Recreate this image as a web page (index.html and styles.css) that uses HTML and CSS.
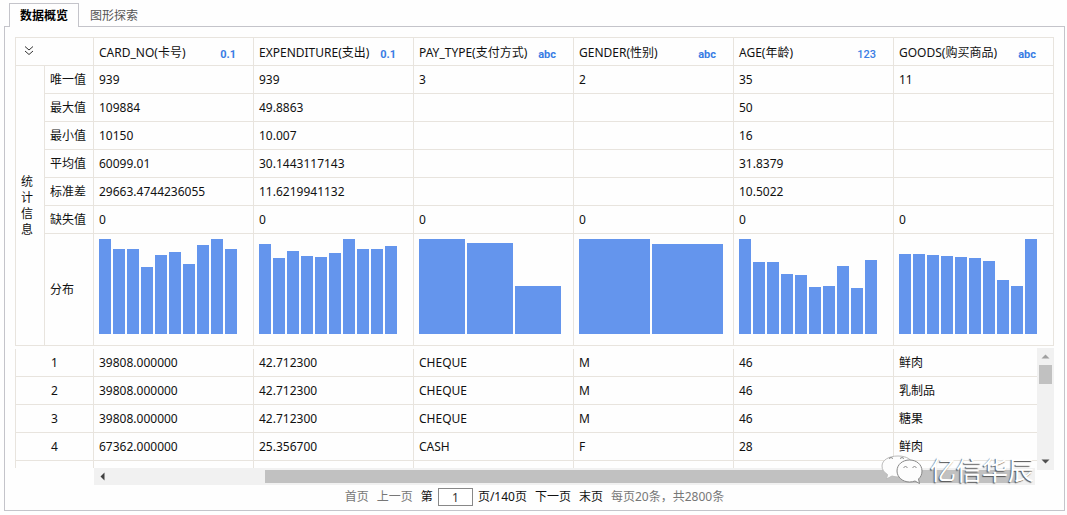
FILE: index.html
```html
<!DOCTYPE html>
<html lang="zh-CN">
<head>
  <meta charset="UTF-8" />
  <meta name="viewport" content="width=device-width, initial-scale=1.0"/>
  <title>数据概览</title>
  <link rel="stylesheet" href="styles.css">
</head>
<body>

<nav class="tabs">
  <button class="tab active">数据概览</button>
  <button class="tab">图形探索</button>
</nav>

<main class="panel">
  <table class="grid stats">
    <colgroup>
      <col class="col-group"><col class="col-label"><col><col><col><col><col><col>
    </colgroup>
    <thead>
      <tr>
        <th colspan="2">
          <button class="toggle" aria-label="收起">
            <svg width="12" height="12" viewBox="0 0 12 12"><path d="M2 1.500L6 5L10 1.500M2 6L6 9.500L10 6"/></svg>
          </button>
        </th>
        <th><div class="head"><span>CARD_NO(卡号)</span><span class="type">0.1</span></div></th>
        <th><div class="head"><span>EXPENDITURE(支出)</span><span class="type">0.1</span></div></th>
        <th><div class="head"><span>PAY_TYPE(支付方式)</span><span class="type">abc</span></div></th>
        <th><div class="head"><span>GENDER(性别)</span><span class="type">abc</span></div></th>
        <th><div class="head"><span>AGE(年龄)</span><span class="type int">123</span></div></th>
        <th><div class="head"><span>GOODS(购买商品)</span><span class="type">abc</span></div></th>
      </tr>
    </thead>
    <tbody>
      <tr>
        <th rowspan="7" class="group"><span>统计信息</span></th>
        <th>唯一值</th><td>939</td><td>939</td><td>3</td><td>2</td><td>35</td><td>11</td>
      </tr>
      <tr><th>最大值</th><td>109884</td><td>49.8863</td><td></td><td></td><td>50</td><td></td></tr>
      <tr><th>最小值</th><td>10150</td><td>10.007</td><td></td><td></td><td>16</td><td></td></tr>
      <tr><th>平均值</th><td>60099.01</td><td>30.1443117143</td><td></td><td></td><td>31.8379</td><td></td></tr>
      <tr><th>标准差</th><td>29663.4744236055</td><td>11.6219941132</td><td></td><td></td><td>10.5022</td><td></td></tr>
      <tr><th>缺失值</th><td>0</td><td>0</td><td>0</td><td>0</td><td>0</td><td>0</td></tr>
      <tr class="dist">
        <th>分布</th>
        <td><div class="chart">
          <i style="height:95px"></i><i style="height:85px"></i><i style="height:85px"></i><i style="height:67px"></i><i style="height:79px"></i><i style="height:82px"></i><i style="height:70px"></i><i style="height:89px"></i><i style="height:95px"></i><i style="height:85px"></i>
        </div></td>
        <td><div class="chart">
          <i style="height:90px"></i><i style="height:76px"></i><i style="height:83px"></i><i style="height:78px"></i><i style="height:77px"></i><i style="height:81px"></i><i style="height:95px"></i><i style="height:85px"></i><i style="height:85px"></i><i style="height:88px"></i>
        </div></td>
        <td><div class="chart three">
          <i style="height:95px"></i><i style="height:91px"></i><i style="height:48px"></i>
        </div></td>
        <td><div class="chart two">
          <i style="height:95px"></i><i style="height:90px"></i>
        </div></td>
        <td><div class="chart">
          <i style="height:95px"></i><i style="height:72px"></i><i style="height:72px"></i><i style="height:60px"></i><i style="height:59px"></i><i style="height:47px"></i><i style="height:48px"></i><i style="height:68px"></i><i style="height:46px"></i><i style="height:74px"></i>
        </div></td>
        <td><div class="chart">
          <i style="height:80px"></i><i style="height:80px"></i><i style="height:79px"></i><i style="height:78px"></i><i style="height:77px"></i><i style="height:76px"></i><i style="height:73px"></i><i style="height:54px"></i><i style="height:48px"></i><i style="height:95px"></i>
        </div></td>
      </tr>
    </tbody>
  </table>

  <div class="data">
    <div class="viewport">
      <table class="grid rows">
        <colgroup>
          <col class="col-index"><col><col><col><col><col><col>
        </colgroup>
        <tbody>
          <tr><th>1</th><td>39808.000000</td><td>42.712300</td><td>CHEQUE</td><td>M</td><td>46</td><td>鲜肉</td></tr>
          <tr><th>2</th><td>39808.000000</td><td>42.712300</td><td>CHEQUE</td><td>M</td><td>46</td><td>乳制品</td></tr>
          <tr><th>3</th><td>39808.000000</td><td>42.712300</td><td>CHEQUE</td><td>M</td><td>46</td><td>糖果</td></tr>
          <tr><th>4</th><td>67362.000000</td><td>25.356700</td><td>CASH</td><td>F</td><td>28</td><td>鲜肉</td></tr>
          <tr><th></th><td></td><td></td><td></td><td></td><td></td><td></td></tr>
        </tbody>
      </table>
    </div>
    <div class="vbar">
      <svg width="9" height="5" viewBox="0 0 9 5"><path fill="#a0a0a0" d="M0.500 4.500L4.500 0.500L8.500 4.500z"/></svg>
      <div class="vthumb"></div>
      <svg width="9" height="5" viewBox="0 0 9 5"><path fill="#505050" d="M0.500 0.500L4.500 4.500L8.500 0.500z"/></svg>
    </div>
  </div>

  <div class="hbar">
    <svg width="5" height="9" viewBox="0 0 5 9"><path fill="#404040" d="M4.500 0.500L0.500 4.500L4.500 8.500z"/></svg>
    <div class="hthumb"></div>
  </div>

  <div class="pager">
    <a class="off" href="#">首页</a>
    <a class="off" href="#">上一页</a>
    <label for="page">第</label>
    <input id="page" type="text" value="1">
    <span>页/140页</span>
    <a href="#">下一页</a>
    <a href="#">末页</a>
    <span class="off">每页20条，共2800条</span>
  </div>

  <div class="watermark">
    <svg width="42" height="30" viewBox="0 0 42 30">
      <path class="back" d="M17 1C8 1 1 5 1 11C1 14.500 3 17.500 6.500 19.500L5.500 24L11 21C13 21.700 15 22 17 22C26 22 32 17.500 32 11C32 5 26 1 17 1z"/>
      <path d="M28.500 5C21.500 5 16 9.500 16 16C16 22 21.500 27 28.500 27C30.500 27 32.500 26.600 34 26L38.500 28.500L37.500 24C40 22 41 19 41 16C41 9.500 35.500 5 28.500 5z"/>
      <path class="eye" d="M8 3.500q2-2 4 0M19 3.500q2-2 4 0M22.500 12.500q2-2 4 0M31.500 12.500q2-2 4 0"/>
    </svg>
    <span>亿信华辰</span>
  </div>
</main>

</body>
</html>
```
FILE: styles.css
```css
* {
  box-sizing: border-box;
}

body {
  margin: 0;
  padding: 3px 2px 4px 4px;
  background: #fefefe;
  color: #111;
  font-family: "Noto Sans", "Noto Sans CJK SC", sans-serif;
  font-size: 12px;
  line-height: 16px;
}

button, input {
  font: inherit;
}

a {
  color: inherit;
  text-decoration: none;
}

/* tabs */
.tabs {
  display: flex;
  padding-left: 5px;
}

.tab {
  height: 24px;
  padding: 0 10px;
  border: 1px solid transparent;
  border-bottom: none;
  background: none;
  color: #555;
}

.tab.active {
  position: relative;
  z-index: 1;
  border-color: #c4c4ca;
  background: #fefefe;
  color: #000;
  font-weight: bold;
}

.panel {
  position: relative;
  margin-top: -1px;
  padding: 10px;
  padding-bottom: 4px;
  border: 1px solid #c4c4ca;
}

/* tables */
.grid {
  width: 100%;
  table-layout: fixed;
  border-collapse: separate;
  border-spacing: 0;
  border-left: 1px solid #e8e4de;
}

.stats {
  border-top: 1px solid #e8e4de;
}

.col-group { width: 29px; }
.col-label { width: 49px; }
.col-index { width: 78px; }

.grid th, .grid td {
  height: 28px;
  padding: 0 0 0 5px;
  border-right: 1px solid #e8e4de;
  border-bottom: 1px solid #e8e4de;
  font-weight: normal;
  text-align: left;
  white-space: nowrap;
}

.grid .group {
  white-space: normal;
}

.group span {
  display: block;
  width: 12px;
}

.grid.rows th {
  padding: 0;
  text-align: center;
}

.head {
  display: flex;
  justify-content: space-between;
  padding-top: 2px;
  padding-right: 17px;
}

.type {
  padding-top: 4px;
  color: #3a7de4;
  font-family: Roboto, sans-serif;
  font-size: 11px;
  font-weight: bold;
  line-height: 12px;
}

.type.int {
  font-weight: 500;
}

.toggle {
  display: flex;
  padding: 0 0 2px 2px;
  border: none;
  background: none;
}

.toggle path {
  fill: none;
  stroke: #333;
}

/* distribution charts */
.grid .dist td, .grid .dist th {
  height: 112px;
}

.grid .dist td {
  padding-top: 5px;
  vertical-align: top;
}

.chart {
  display: flex;
  align-items: flex-end;
  gap: 2px;
  height: 95px;
}

.chart i {
  width: 12px;
  background: #6495ed;
}

.chart.three i { width: 46px; }
.chart.two i { width: 71px; }

/* data rows and scroll bars */
.data {
  display: flex;
  padding-top: 3px;
}

.viewport {
  flex: 1;
  height: 119px;
  overflow: hidden;
}

.rows {
  width: calc(100% + 17px);
}

.vbar {
  display: flex;
  flex-direction: column;
  align-items: center;
  width: 17px;
  height: 122px;
  margin-top: -1px;
  margin-bottom: -2px;
  padding: 6px 0;
  background: #f1f1f1;
}

.vthumb {
  width: 13px;
  height: 19px;
  margin: 6px 0 auto;
  background: #c1c1c1;
}

.hbar {
  display: flex;
  align-items: center;
  height: 17px;
  margin: 0 19px 0 79px;
  padding: 0 18px 0 6px;
  background: #f1f1f1;
}

.hthumb {
  flex: 1;
  height: 13px;
  margin-left: 160px;
  background: #c1c1c1;
}

/* pager */
.pager {
  display: flex;
  justify-content: center;
  align-items: center;
  gap: 8px;
  padding-top: 3px;
}

.pager input {
  width: 35px;
  height: 18px;
  margin: 0 -3px;
  padding: 0;
  border: 1px solid #888;
  background: #fff;
  color: #333;
  text-align: center;
}

.off {
  color: #777;
}

.watermark {
  position: absolute;
  right: 30px;
  bottom: 24px;
  display: flex;
  align-items: center;
  gap: 7px;
  color: #fff;
  font-size: 26px;
  line-height: 32px;
  text-shadow: -1px 1px 1px #555;
}

.watermark path {
  fill: #fdfdfd;
  stroke: #888;
}

.watermark .back {
  stroke: #bbb;
}

.watermark .eye {
  fill: none;
}
```
